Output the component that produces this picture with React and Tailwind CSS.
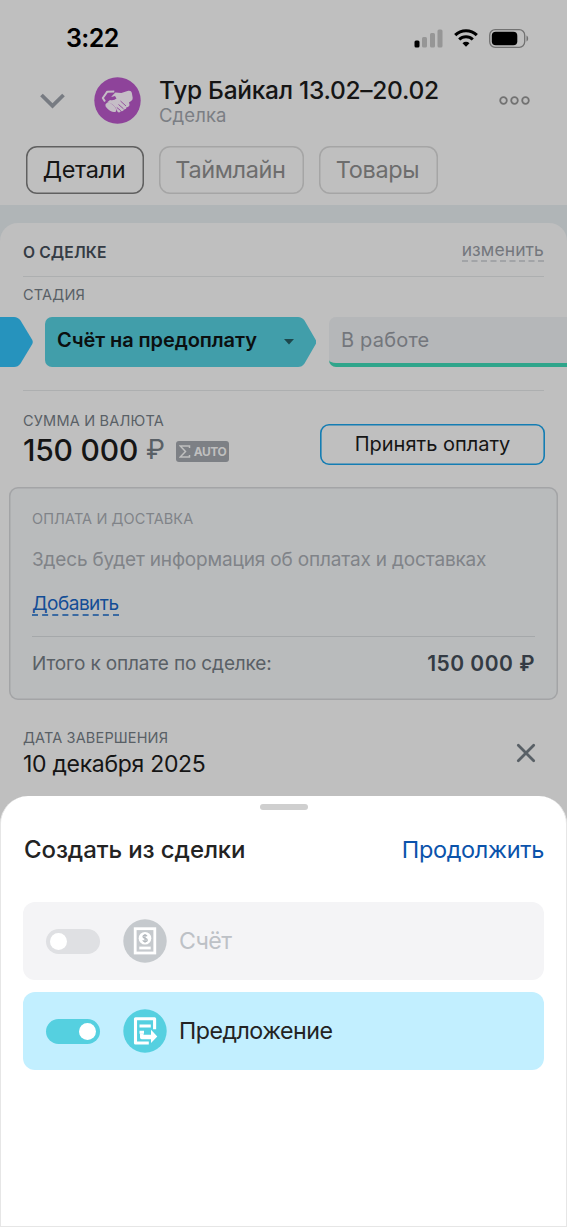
import React, { useState } from "react";

const tabs = [
  { id: "details", label: "Детали", width: "w-[118px]" },
  { id: "timeline", label: "Таймлайн", width: "w-[145px]" },
  { id: "products", label: "Товары", width: "w-[119px]" },
];

function StatusBar() {
  return (
    <div className="flex h-[72px] items-start justify-between pt-[23px] pr-[38px] pl-[66px]">
      <span className="text-[25px] leading-[30px] font-semibold tracking-[-0.6px] text-black">3:22</span>
      <div className="flex h-[30px] items-center gap-[11px]">
        <svg width="29" height="19" viewBox="0 0 29 19">
          <rect x="0.5" y="11.5" width="5" height="7" rx="1.5" fill="#000" />
          <rect x="8" y="8" width="5" height="10.5" rx="1.5" fill="#969696" />
          <rect x="16" y="4" width="5" height="14.5" rx="1.5" fill="#969696" />
          <rect x="23.5" y="0.5" width="5" height="18" rx="1.5" fill="#969696" />
        </svg>
        <svg width="24" height="18" viewBox="0 0 24 18" fill="none" stroke="#000">
          <path d="M1.2 6.2a15.5 15.5 0 0 1 21.6 0" strokeWidth="3.1" />
          <path d="M5.2 10.5a9.7 9.7 0 0 1 13.6 0" strokeWidth="3" />
          <path d="M12 17.8l-3.5-3.5a5 5 0 0 1 7 0z" fill="#000" stroke="none" />
        </svg>
        <svg width="40" height="19" viewBox="0 0 40 19">
          <rect x="0.7" y="0.7" width="35" height="17.6" rx="5.5" fill="none" stroke="#727272" strokeWidth="1.3" />
          <rect x="2.8" y="2.8" width="25.5" height="13.4" rx="4" fill="#000" />
          <path d="M37.5 6.5c2.2 1 2.200 5 0 6z" fill="#727272" />
        </svg>
      </div>
    </div>
  );
}

function Handshake() {
  return (
    <svg className="shrink-0" width="47" height="47" viewBox="0 0 47 47">
      <circle cx="23.5" cy="23.5" r="23.2" fill="#8e439a" />
      <path d="M11 24.500L8.800 21l4.500-6.300 7-.2" fill="none" stroke="#c5bdc6" strokeWidth="2" strokeLinejoin="round" />
      <path
        d="M17.500 19.500l3.800-4 6 .6 7-2.300q3-.5 3.500 2l.9 5q.2 2-1.300 3l-2.400 1.700q1.200 3-.5 4-.7.800-1.800.6-.2 2.600-2.700 2.400-.8 2.400-3 1.600-1.300 2.200-3.300 1-1.200-4-4.200-6.800-3-3-6.500-2.800l3-2.500q4 .8 6.500-1.500l-1.500-2.500-3.500 1z"
        fill="#c5bdc6"
      />
      <path d="M26.500 24l5.500 5M24.500 27.500l5 4.300M22.800 30.500l4 3.200" stroke="#8e439a" strokeWidth="0.9" />
      <path d="M11.500 27.200q1.500-2.300 4.500-1.400 4.500 2.700 6.300 6.400.3 3-2.300 2.900-3.500-.2-7.200-4.100-2-1.700-1.300-3.800z" fill="#c5bdc6" />
    </svg>
  );
}

function Header() {
  const [active, setActive] = useState("details");

  return (
    <header className="h-[205px]">
      <StatusBar />
      <div className="flex h-[56px] items-center pr-[37px] pl-[40px]">
        <svg className="mt-[2px]" width="25" height="16" viewBox="0 0 25 16" fill="none" stroke="#777b82" strokeWidth="3.8">
          <path d="M1.5 2l11 10.8L23.5 2" />
        </svg>
        <div className="ml-[29px]">
          <Handshake />
        </div>
        <div className="ml-[18px] flex-1 pt-[2px]">
          <h1 className="text-[24.5px] leading-[29px] font-medium tracking-[-0.28px] whitespace-nowrap text-[#151515]">Тур Байкал 13.02–20.02</h1>
          <p className="text-[18.5px] leading-[21px] tracking-[0.1px] text-[#7b7e84]">Сделка</p>
        </div>
        <svg width="31" height="9" viewBox="0 0 31 9" fill="none" stroke="#727272" strokeWidth="1.8">
          <circle cx="4.5" cy="4.5" r="3.3" />
          <circle cx="15.5" cy="4.5" r="3.3" />
          <circle cx="26.5" cy="4.5" r="3.3" />
        </svg>
      </div>
      <nav className="mt-[18px] flex gap-[15px] pl-[26px]">
        {tabs.map((tab) => (
          <button
            key={tab.id}
            onClick={() => setActive(tab.id)}
            className={`h-[48px] rounded-[11px] pr-[2px] text-[23.5px] tracking-[-0.35px] ${tab.width} ${
              active === tab.id
                ? "text-[#151515] shadow-[inset_0_0_0_1.5px_#606060]"
                : "text-[#6d6d6d] shadow-[inset_0_0_0_1.5px_#a5a5a5]"
            }`}
          >
            {tab.label}
          </button>
        ))}
      </nav>
    </header>
  );
}

function Stages() {
  return (
    <div className="mt-[12px] flex h-[50px] overflow-hidden">
      <svg className="shrink-0" width="33" height="50" viewBox="0 0 33 50">
        <path d="M0 0h14q4 0 6.5 3.5L32 22.5q1.5 2.5 0 5L20.5 46.5Q18 50 14 50H0z" fill="#2693bd" />
      </svg>
      <div className="ml-[12px] flex shrink-0">
        <div className="flex h-[50px] w-[251px] items-center justify-between rounded-l-[7px] bg-[#419eaa] pr-[1px] pb-[4px] pl-[12px]">
          <span className="text-[20px] font-semibold tracking-[-0.08px] whitespace-nowrap text-[#0b0f10]">Счёт на предоплату</span>
          <svg className="mt-[4px]" width="12" height="6" viewBox="0 0 12 6">
            <path d="M1 0h10L6 5.5z" fill="#1d474c" />
          </svg>
        </div>
        <svg width="20" height="50" viewBox="0 0 20 50">
          <path d="M0 0h2q4 0 6.5 3.5L19.5 22.5q1.5 2.5 0 5L8.5 46.5Q6 50 2 50H0z" fill="#419eaa" />
        </svg>
      </div>
      <div className="ml-[13px] h-[50px] w-[260px] shrink-0 overflow-hidden rounded-l-[7px] border-b-[4px] border-[#2fa58b] bg-[#b5b7b9] pt-[8px] pl-[12px] text-[20px] leading-[30px] tracking-[0.2px] text-[#73767c]">
        В работе
      </div>
    </div>
  );
}

function PaymentCard() {
  return (
    <div className="mx-[9px] mt-[22px] h-[213px] rounded-[9px] bg-[#b9bbbc] px-[23px] pt-[21px] shadow-[inset_0_0_0_1.5px_#a3a4a6]">
      <p className="text-[14.5px] leading-[22px] tracking-[0.1px] text-[#808388]">ОПЛАТА И ДОСТАВКА</p>
      <p className="mt-[16px] text-[19px] leading-[28px] tracking-[-0.17px] whitespace-nowrap text-[#808388]">
        Здесь будет информация об оплатах и доставках
      </p>
      <a className="mt-[20px] block w-fit border-b-2 border-dashed border-[#3a6aa2] text-[19px] leading-[20px] tracking-[-0.5px] text-[#134d96]">Добавить</a>
      <div className="mt-[20px] flex items-center justify-between border-t border-[#a5a8aa] pt-[13px] leading-[28px]">
        <span className="text-[19px] tracking-[-0.14px] text-[#596066]">Итого к оплате по сделке:</span>
        <span className="text-[21px] font-semibold tracking-[0.5px] text-[#343b44]">150 000 ₽</span>
      </div>
    </div>
  );
}

function DealCard() {
  return (
    <section className="h-[1004px] rounded-t-[18px] bg-[#bfbfbf] pt-[17px]">
      <div className="mx-[23px] flex h-[37px] items-start justify-between border-b border-[#adafb0]">
        <h2 className="pt-[2px] text-[15.7px] leading-[22px] font-semibold tracking-[0.1px] text-[#343b44]">О СДЕЛКЕ</h2>
        <a className="border-b-2 border-dashed border-[#a2a4a7] text-[17.5px] leading-[20px] tracking-[0.1px] text-[#74777d]">изменить</a>
      </div>
      <p className="mt-[8px] pl-[23px] text-[14.5px] leading-[20px] tracking-[0.2px] text-[#596066]">СТАДИЯ</p>
      <Stages />
      <div className="mx-[23px] mt-[23px] border-b border-[#adafb0]" />

      <div className="flex h-[74px] justify-between pr-[22px] pl-[23px]">
        <div className="pt-[20px]">
          <p className="text-[14.5px] leading-[20px] tracking-[0.2px] text-[#596066]">СУММА И ВАЛЮТА</p>
          <div className="mt-[1px] flex items-center">
            <span className="text-[30px] leading-[36px] font-medium tracking-[-0.2px] text-[#151515]">150 000</span>
            <span className="ml-[8px] text-[27px] leading-[36px] text-[#596066]">₽</span>
            <span className="mt-[2px] ml-[11px] flex h-[21px] w-[53px] items-center justify-center gap-[3px] rounded-[3px] bg-[#7d8085] text-[12px] leading-[21px] font-bold tracking-[-0.5px] text-[#bfbfbf]">
              <svg width="12" height="13" viewBox="0 0 12 13" fill="none" stroke="#bfbfbf" strokeWidth="1.5">
                <path d="M10.5 3V1H1.2l5.3 5.5L1.2 12h9.3v-2" />
              </svg>
              AUTO
            </span>
          </div>
        </div>
        <button className="mt-[33px] h-[41px] w-[225px] rounded-[9px] pb-[1px] text-[20px] text-[#151515] shadow-[inset_0_0_0_1.6px_#147db3]">
          Принять оплату
        </button>
      </div>

      <PaymentCard />

      <div className="flex items-start justify-between pt-[28px] pr-[31px] pl-[23px]">
        <div>
          <p className="text-[14.5px] leading-[20px] tracking-[0.15px] text-[#596066]">ДАТА ЗАВЕРШЕНИЯ</p>
          <p className="text-[23px] leading-[32px] tracking-[-0.3px] text-[#151515]">10 декабря 2025</p>
        </div>
        <svg className="mt-[15px]" width="20" height="20" viewBox="0 0 20 20" stroke="#596066" strokeWidth="2.8" strokeLinecap="round">
          <path d="M2.3 2.3l15.4 15.4M17.7 2.3L2.3 17.7" />
        </svg>
      </div>
    </section>
  );
}

function InvoiceIcon() {
  return (
    <svg width="44" height="44" viewBox="0 0 44 44">
      <circle cx="22" cy="22" r="21.7" fill="#c5c9cd" />
      <rect x="12.2" y="9.7" width="19.6" height="24.3" fill="none" stroke="#fff" strokeWidth="2.8" />
      <circle cx="22" cy="19.3" r="6.3" fill="#fff" />
      <path d="M16.3 29h11.4" stroke="#fff" strokeWidth="2.8" />
      <path
        d="M24 17.3c-.4-.8-1.1-1.100-2-1.100-1.200 0-2 .6-2 1.500 0 2.200 4.200 1 4.200 3.200 0 1-.9 1.600-2.200 1.600-1 0-1.800-.4-2.200-1.200M22 15v8.800"
        fill="none"
        stroke="#b3b8bd"
        strokeWidth="1.3"
      />
    </svg>
  );
}

function OfferIcon() {
  return (
    <svg width="44" height="44" viewBox="0 0 44 44" fill="none" stroke="#fff">
      <circle cx="22" cy="22" r="21.7" fill="#55d0e0" stroke="none" />
      <path d="M31.6 20.300V9.800H12.500v24.200h13.300" strokeWidth="3.100" strokeLinejoin="round" />
      <path d="M16.500 17h11.300M16.500 23.200h4.500" strokeWidth="3" />
      <path d="M17 24.500h2.500l1.500 1.200h7V20.800l6.300 6.700-6.300 6.500v-3.800h-9.300q-1.700 0-1.700-1.700z" fill="#fff" stroke="none" />
    </svg>
  );
}

function OptionRow({ label, icon, checked, onToggle }) {
  return (
    <div
      onClick={onToggle}
      className={`flex h-[78px] items-center rounded-[12px] pl-[23px] ${checked ? "bg-[#c2efff]" : "bg-[#f4f4f6]"}`}
    >
      <div
        className={`flex h-[25px] w-[54px] items-center rounded-full px-[4px] ${
          checked ? "justify-end bg-[#55d0e0]" : "justify-start bg-[#dfe0e3]"
        }`}
      >
        <div className="h-[17px] w-[17px] rounded-full bg-white" />
      </div>
      <div className="ml-[23px]">{icon}</div>
      <span className={`ml-[12px] text-[23.2px] tracking-[-0.5px] ${checked ? "text-[#232323]" : "text-[#bdc1c6]"}`}>{label}</span>
    </div>
  );
}

function CreateSheet() {
  const [selected, setSelected] = useState({ invoice: false, offer: true });
  const toggle = (key) => setSelected({ ...selected, [key]: !selected[key] });

  return (
    <div className="absolute inset-x-0 bottom-0 h-[431px] rounded-t-[28px] border border-t-0 border-[#e6e6e6] bg-white px-[22px] pt-[8px]">
      <div className="mx-auto h-[6px] w-[48px] rounded-full bg-[#cfcfcf]" />
      <div className="mt-[24px] flex h-[32px] items-center justify-between pl-[1px]">
        <h2 className="text-[24px] font-medium tracking-[-0.1px] text-[#232323]">Создать из сделки</h2>
        <button className="text-[23.5px] tracking-[-0.35px] text-[#0b53ab]">Продолжить</button>
      </div>
      <div className="mt-[36px] flex flex-col gap-[12px]">
        <OptionRow label="Счёт" icon={<InvoiceIcon />} checked={selected.invoice} onToggle={() => toggle("invoice")} />
        <OptionRow label="Предложение" icon={<OfferIcon />} checked={selected.offer} onToggle={() => toggle("offer")} />
      </div>
    </div>
  );
}

function App() {
  return (
    <div className="relative h-[1227px] w-[567px] overflow-hidden bg-[#bfbfbf] font-['Inter',sans-serif]">
      <Header />
      <div className="bg-[#b0b5b7] pt-[18px]">
        <DealCard />
      </div>
      <CreateSheet />
    </div>
  );
}

export default App;
